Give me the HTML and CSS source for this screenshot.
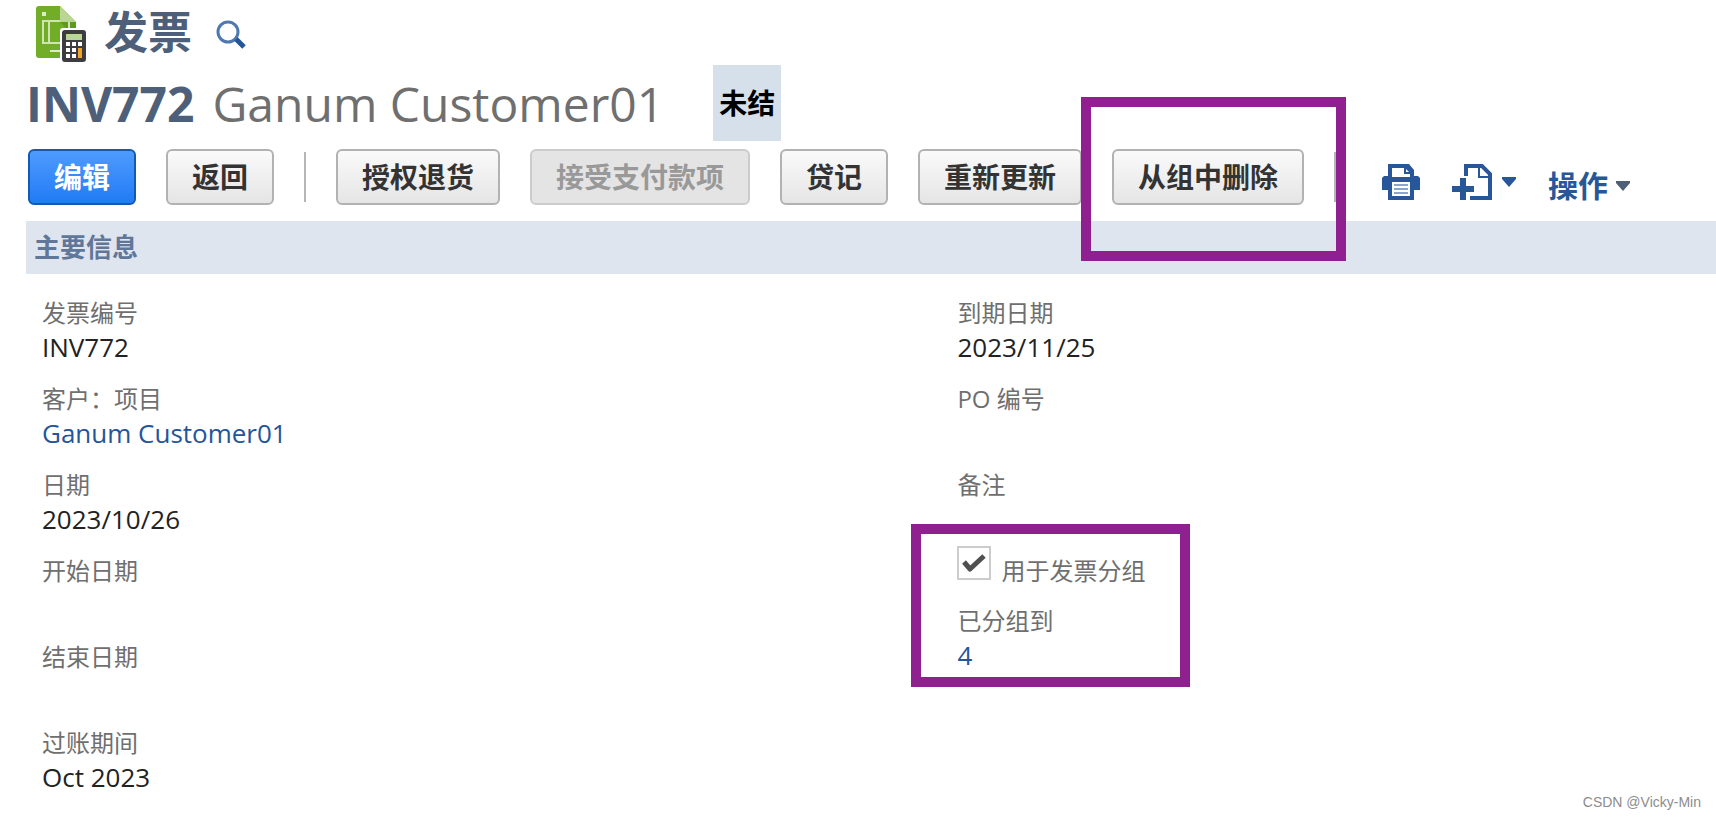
FILE: index.html
```html
<!DOCTYPE html>
<html lang="zh-CN">
<head>
<meta charset="utf-8">
<meta name="viewport" content="width=device-width, initial-scale=1">
<title>发票 INV772</title>
<link rel="stylesheet" href="styles.css">
</head>
<body>
<main class="page">
  <header class="header">
    <div class="title-row">
      <svg class="record-icon" width="50" height="56" viewBox="0 0 50 56" aria-hidden="true">
        <path fill="#72ad28" d="M3 0H24L40 16V52H3Q0 52 0 49V3Q0 0 3 0Z"/>
        <path fill="#5f9a1c" d="M24 16H40V24H32Z"/>
        <path fill="#b9d792" d="M24 0L40 16H24Z"/>
        <path fill="#dcebc8" d="M6 6h4v4H6zM14 44h12v2H14z"/>
        <path fill="none" stroke="#cfe3b5" stroke-width="2" d="M24 15H7V37H26M13 15V37M33 16V24"/>
        <path fill="#fff" d="M27 22H50V56H24V25Q24 22 27 22Z"/>
        <rect x="26" y="24" width="24" height="32" rx="3" fill="#3d3d3f"/>
        <path fill="#b9d792" d="M30 28h16v6H30z"/>
        <path fill="#fff" d="M30 36h4v4h-4zM36 36h4v4h-4zM42 36h4v4h-4zM30 42h4v4h-4zM36 42h4v4h-4zM30 48h4v4h-4zM36 48h4v4h-4z"/>
        <path fill="#f2a32c" d="M42 42h4v10h-4z"/>
      </svg>
      <h1 class="title">发票</h1>
      <button class="icon-button search" type="button" aria-label="搜索">
        <svg width="30" height="30" viewBox="0 0 30 30" aria-hidden="true">
          <circle cx="12" cy="12" r="10" fill="none" stroke="#5078b0" stroke-width="3"/>
          <path d="M20 19L28 27" stroke="#255599" stroke-width="5" fill="none"/>
        </svg>
      </button>
    </div>
    <div class="record-row">
      <span class="record-id">INV772</span>
      <span class="record-name">Ganum Customer01</span>
      <span class="status">未结</span>
    </div>
  </header>

  <div class="toolbar">
    <button class="button primary" type="button">编辑</button>
    <button class="button" type="button">返回</button>
    <span class="separator"></span>
    <button class="button" type="button">授权退货</button>
    <button class="button" type="button" disabled>接受支付款项</button>
    <button class="button" type="button">贷记</button>
    <button class="button" type="button">重新更新</button>
    <div class="marked">
      <button class="button" type="button">从组中删除</button>
      <span class="mark mark-button"></span>
    </div>
    <span class="separator"></span>
    <div class="tools">
      <button class="icon-button" type="button" aria-label="打印">
        <svg width="38" height="36" viewBox="0 0 38 36" aria-hidden="true">
          <path fill="#285799" d="M6 0H27L32 6V12H36L38 14V26H32V36H6V26H0V14L2 12H6Z"/>
          <path fill="#fff" d="M10 4H22V10H28V13H10ZM10 18H28V32H10Z"/>
          <path fill="#fff" d="M24 5L27 8H24Z"/>
          <path fill="none" stroke="#8ba6cb" stroke-width="2" d="M12 21H26M12 25H26M12 29H26"/>
        </svg>
      </button>
      <button class="icon-button menu" type="button" aria-label="新建">
        <svg width="40" height="36" viewBox="0 0 40 36" aria-hidden="true">
          <path fill="none" stroke="#285799" stroke-width="4" d="M14 12V2H30L38 10V34H18"/>
          <path fill="none" stroke="#285799" stroke-width="2" d="M27 3V13H37"/>
          <path fill="none" stroke="#285799" stroke-width="6" d="M11 14V36M0 25H22"/>
        </svg>
        <svg width="14" height="10" viewBox="0 0 14 10" aria-hidden="true"><path fill="#285799" d="M0 0H14V2L7 10L0 2Z"/></svg>
      </button>
      <button class="icon-button actions" type="button">操作
        <svg width="14" height="10" viewBox="0 0 14 10" aria-hidden="true"><path fill="#4d5f79" d="M0 0H14V2L7 10L0 2Z"/></svg>
      </button>
    </div>
  </div>

  <h2 class="section-title">主要信息</h2>

  <div class="fields">
    <dl class="column">
      <div class="field"><dt>发票编号</dt><dd>INV772</dd></div>
      <div class="field"><dt>客户：项目</dt><dd><a href="#customer">Ganum Customer01</a></dd></div>
      <div class="field"><dt>日期</dt><dd>2023/10/26</dd></div>
      <div class="field"><dt>开始日期</dt><dd></dd></div>
      <div class="field"><dt>结束日期</dt><dd></dd></div>
      <div class="field"><dt>过账期间</dt><dd>Oct 2023</dd></div>
    </dl>
    <div class="column">
      <dl class="list">
        <div class="field"><dt>到期日期</dt><dd>2023/11/25</dd></div>
        <div class="field"><dt>PO 编号</dt><dd></dd></div>
        <div class="field"><dt>备注</dt><dd></dd></div>
      </dl>
      <div class="marked group">
        <div class="check-field">
          <span class="check">
            <input class="check-input" type="checkbox" id="grouped" checked>
            <svg class="check-mark" width="24" height="20" viewBox="0 0 24 20" aria-hidden="true"><path fill="none" stroke="#505050" stroke-width="5" stroke-linejoin="round" d="M2 9L8 16L22 3"/></svg>
          </span>
          <label for="grouped">用于发票分组</label>
        </div>
        <dl class="list">
          <div class="field"><dt>已分组到</dt><dd><a href="#group">4</a></dd></div>
        </dl>
        <span class="mark mark-group"></span>
      </div>
    </div>
  </div>
</main>
<span class="watermark">CSDN @Vicky-Min</span>
</body>
</html>
```
FILE: styles.css
```css
* {
  box-sizing: border-box;
}

body {
  position: relative;
  min-height: 100vh;
  margin: 0;
  background: #fff;
  color: #222;
  font-family: "Open Sans", "Noto Sans CJK SC", sans-serif;
  font-size: 26px;
}

h1, h2, dl, dd {
  margin: 0;
}

a {
  color: #255599;
  text-decoration: none;
}

svg {
  display: block;
  flex: none;
}

.page {
  padding-left: 26px;
}

.title-row {
  display: flex;
  align-items: center;
  height: 65px;
  padding: 2px 0 0 10px;
}

.title {
  margin: 0 24px 4px 18px;
  color: #4d5f79;
  font-size: 44px;
  line-height: 56px;
}

.icon-button {
  display: flex;
  align-items: center;
  padding: 0;
  border: 0;
  background: none;
  color: #285799;
  font: inherit;
  cursor: pointer;
}

.search {
  padding-top: 2px;
}

.record-row {
  display: flex;
  align-items: center;
  height: 76px;
  font-size: 48px;
  white-space: nowrap;
}

.record-id {
  margin-right: 18px;
  color: #4d5f79;
  font-weight: 700;
}

.record-name {
  margin-right: 49px;
  color: #6f6f6f;
}

.status {
  padding: 0 6px;
  background: #d6e0eb;
  color: #000;
  font-size: 28px;
  font-weight: 700;
  line-height: 76px;
}

.toolbar {
  display: flex;
  align-items: center;
  gap: 30px;
  padding: 8px 0 16px 2px;
}

.button {
  flex: none;
  height: 56px;
  padding: 0 24px;
  border: 2px solid #b2b2b2;
  border-radius: 6px;
  background: linear-gradient(#fafafa, #e5e5e5);
  color: #333;
  font-family: inherit;
  font-size: 28px;
  font-weight: 700;
  line-height: 48px;
  white-space: nowrap;
}

.button.primary {
  border-color: #125ab2;
  background: linear-gradient(#4f9bff, #217bf5);
  color: #fff;
}

.button:disabled {
  border-color: #ccc;
  background: #e4e4e4;
  color: #999;
}

.separator {
  flex: none;
  width: 2px;
  height: 50px;
  background: #b5b5b5;
}

.marked {
  position: relative;
}

.mark {
  position: absolute;
  border: 10px solid #901f8f;
  pointer-events: none;
}

.mark-button {
  inset: -52px -42px -56px -31px;
}

.tools {
  display: flex;
  align-items: center;
  gap: 32px;
  padding: 10px 0 0 16px;
}

.menu {
  gap: 10px;
}

.actions {
  gap: 8px;
  padding-top: 8px;
  font-size: 30px;
  font-weight: 700;
  line-height: 34px;
}

.section-title {
  padding-left: 8px;
  background: #dfe5ef;
  color: #607799;
  font-size: 26px;
  line-height: 53px;
}

.fields {
  display: grid;
  grid-template-columns: 13fr 11fr;
  padding-top: 22px;
}

.column {
  padding-left: 16px;
}

.field {
  padding-bottom: 18px;
}

dt,
label {
  color: #6f6f6f;
  font-size: 24px;
  line-height: 34px;
}

dd {
  min-height: 34px;
  line-height: 34px;
}

.group {
  width: max-content;
}

.check-field {
  display: flex;
  align-items: flex-end;
  gap: 10px;
  height: 34px;
  margin-bottom: 16px;
}

.check {
  position: relative;
  margin-bottom: 8px;
}

.check-input {
  display: block;
  width: 34px;
  height: 34px;
  margin: 0;
  border: 2px solid #ccc;
  background: #fff;
  appearance: none;
}

.check-mark {
  position: absolute;
  top: 7px;
  left: 5px;
  pointer-events: none;
}

.mark-group {
  inset: -30px -45px 3px -46px;
}

.watermark {
  position: absolute;
  right: 15px;
  bottom: 9px;
  color: #8c8c8c;
  font-family: "Liberation Sans", sans-serif;
  font-size: 14px;
  line-height: 18px;
}
```
